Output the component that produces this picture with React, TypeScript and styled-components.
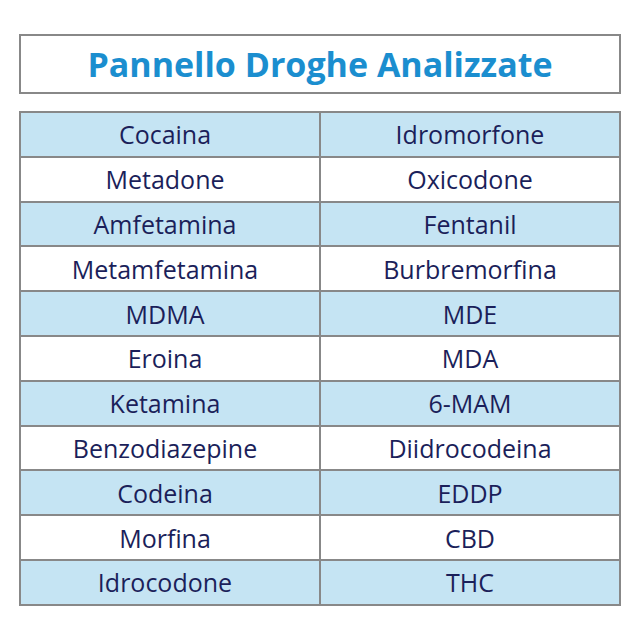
import styled, { createGlobalStyle } from 'styled-components';

const drugs: [string, string][] = [
  ['Cocaina', 'Idromorfone'],
  ['Metadone', 'Oxicodone'],
  ['Amfetamina', 'Fentanil'],
  ['Metamfetamina', 'Burbremorfina'],
  ['MDMA', 'MDE'],
  ['Eroina', 'MDA'],
  ['Ketamina', '6-MAM'],
  ['Benzodiazepine', 'Diidrocodeina'],
  ['Codeina', 'EDDP'],
  ['Morfina', 'CBD'],
  ['Idrocodone', 'THC'],
];

const GlobalStyle = createGlobalStyle`
  body {
    margin: 0;
    background: #ffffff;
    font-family: 'Open Sans', 'Liberation Sans', sans-serif;
  }
`;

const Page = styled.div`
  width: 640px;
  height: 640px;
  box-sizing: border-box;
  padding: 34px 19px 0 19px;
  display: flex;
  flex-direction: column;
  gap: 17px;
`;

const TitleBox = styled.div`
  height: 60px;
  box-sizing: border-box;
  border: 2px solid #888888;
  display: flex;
  align-items: center;
  justify-content: center;
`;

const Title = styled.h1`
  margin: 0;
  font-size: 34px;
  font-weight: 700;
  color: #1b8ecf;
  line-height: 1;
`;

const Table = styled.table`
  width: 602px;
  border-collapse: collapse;
  table-layout: fixed;
  border: 2px solid #888888;
`;

const Row = styled.tr<{ $shaded: boolean }>`
  height: 44.8px;
  background: ${({ $shaded }) => ($shaded ? '#c5e4f3' : '#ffffff')};
`;

const Cell = styled.td<{ $first?: boolean }>`
  border: 2px solid #888888;
  padding: 0 ${({ $first }) => ($first ? '10px' : '0')} 0 0;
  text-align: center;
  vertical-align: middle;
  font-size: 25px;
  font-weight: 500;
  color: #1b1f5a;
`;

export default function App() {
  return (
    <>
      <GlobalStyle />
      <Page>
        <TitleBox>
          <Title>Pannello Droghe Analizzate</Title>
        </TitleBox>
        <Table>
          <tbody>
            {drugs.map(([a, b], i) => (
              <Row key={a} $shaded={i % 2 === 0}>
                <Cell $first>{a}</Cell>
                <Cell>{b}</Cell>
              </Row>
            ))}
          </tbody>
        </Table>
      </Page>
    </>
  );
}
